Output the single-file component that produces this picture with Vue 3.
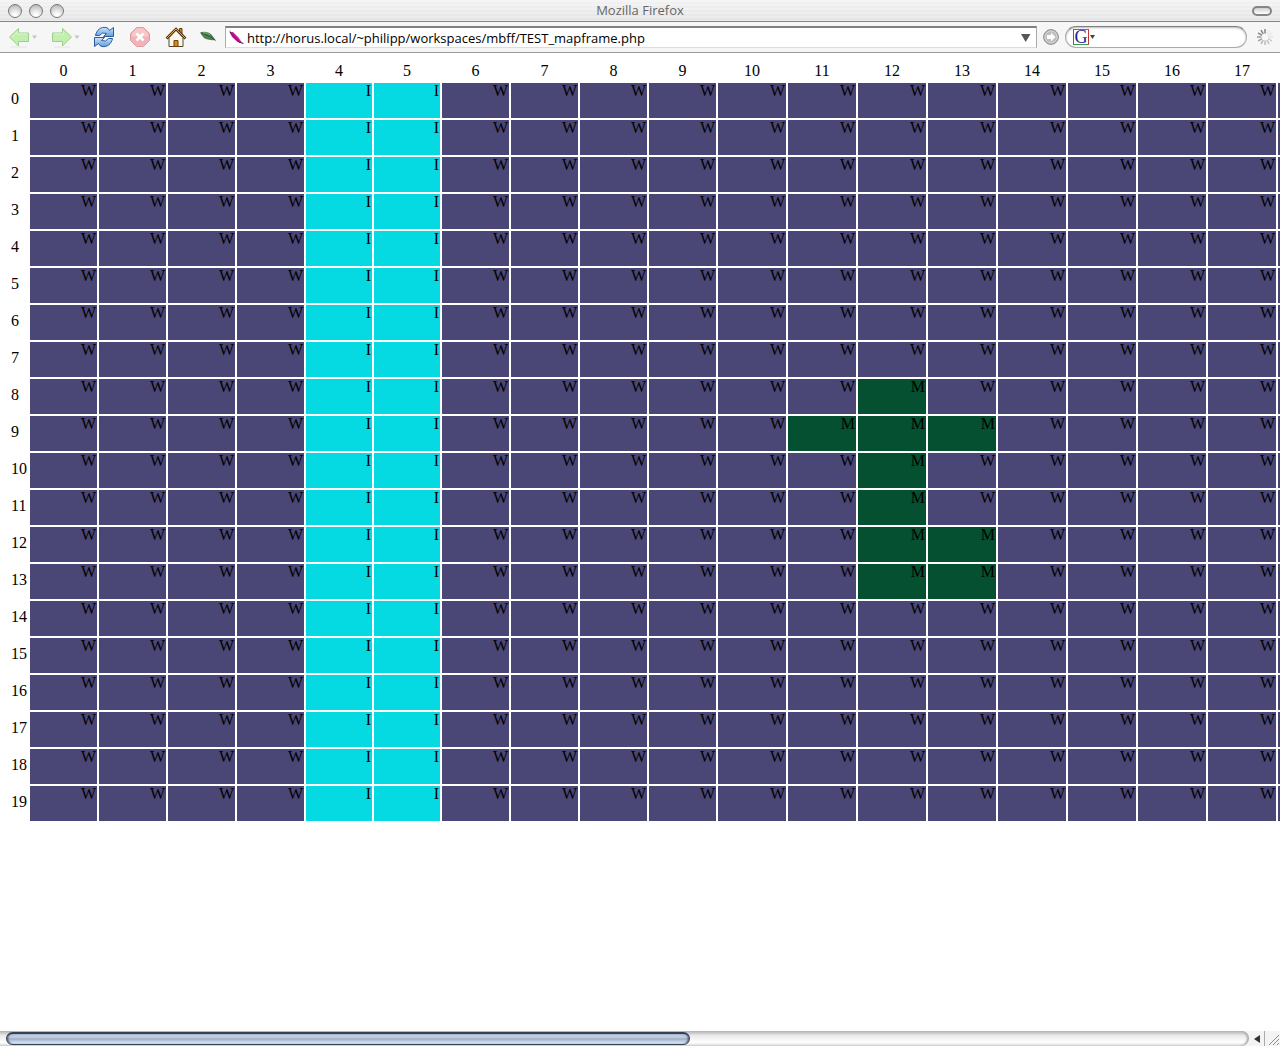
<script setup>
import { ref } from 'vue'

const address = ref('http://horus.local/~philipp/workspaces/mbff/TEST_mapframe.php')
const query = ref('')

const columns = Array.from({ length: 18 }, (_, i) => i)
const rows = Array.from({ length: 20 }, (_, i) => i)

const mountains = { 8: [12], 9: [11, 12, 13], 10: [12], 11: [12], 12: [12, 13], 13: [12, 13] }

function terrain(row, col) {
  if (col === 4 || col === 5) return 'I'
  return mountains[row]?.includes(col) ? 'M' : 'W'
}

function columnSize(col) {
  if (col === 4 || col === 5) return 'ice'
  return col > 9 ? 'wide' : 'regular'
}

const spokes = Array.from({ length: 12 }, (_, i) => ({
  angle: i * 30,
  opacity: [0.9, 0.1, 0.1, 0.15, 0.3, 0.4, 0.45, 0.5, 0.6, 0.7, 0.8, 0.9][i]
}))
</script>

<template>
  <div class="window">
    <header class="titlebar">
      <div class="lights">
        <button class="light" aria-label="Close"></button>
        <button class="light" aria-label="Minimize"></button>
        <button class="light" aria-label="Zoom"></button>
      </div>
      <h1 class="title">Mozilla Firefox</h1>
      <div class="right"><button class="pill" aria-label="Toggle toolbar"></button></div>
    </header>

    <div class="toolbar">
      <nav class="nav">
        <button aria-label="Back">
          <svg width="30" height="22" viewBox="8 26 30 22">
            <path d="M10 47h17" stroke="#e4e4e4" />
            <path d="M9.500 37l9-8.500v4.500h10v8.500h-10v4.500z" fill="#c3efae" stroke="#9dce8c" stroke-linejoin="round" />
            <path d="M12 37l5.500-5v2h10" fill="none" stroke="#dcf7cf" />
            <path d="M32 35.500h5l-2.500 3.500z" fill="#c4c4cc" />
          </svg>
        </button>
        <button aria-label="Forward">
          <svg width="30" height="22" viewBox="50 26 30 22">
            <path d="M54 47h16" stroke="#e4e4e4" />
            <path d="M71.500 37l-9-8.500v4.500h-10v8.500h10v4.500z" fill="#c3efae" stroke="#9dce8c" stroke-linejoin="round" />
            <path d="M53.500 34h10v-3" fill="none" stroke="#dcf7cf" />
            <path d="M74.500 35.500h5l-2.500 3.500z" fill="#c4c4cc" />
          </svg>
        </button>
        <button aria-label="Reload">
          <svg width="24" height="22" viewBox="92 26 24 22">
            <defs>
              <linearGradient id="blue" x1="0" y1="0" x2="0" y2="1">
                <stop offset="0" stop-color="#cfe5fa" /><stop offset="1" stop-color="#5c9de0" />
              </linearGradient>
            </defs>
            <g fill="url(#blue)" stroke="#2d5c9e" stroke-linejoin="round">
              <path d="M95.500 35.500C96.500 30 101 26.500 106 27.500Q108.500 28 109.500 30.500L113.500 27.500V36.500H103.500L106.500 33.500Q102 31.500 99.500 35.500z" />
              <path d="M112.500 38.500C111.500 44 107 47.500 102 46.500Q99.500 46 98.500 43.500L94.500 46.500V37.500H104.500L101.500 40.500Q106 42.500 108.500 38.500z" />
            </g>
          </svg>
        </button>
        <button aria-label="Stop">
          <svg width="24" height="22" viewBox="128 26 24 22">
            <path d="M136.500 27.500h7l6 6v7l-6 6h-7l-6-6v-7z" fill="#f0b3b7" stroke="#df9ca1" />
            <path d="M137 28.500h6l5 5v3h-16v-3z" fill="#f6c8cb" />
            <path d="M136.500 33.500l7 7M143.500 33.500l-7 7" stroke="#fff" stroke-width="2.500" />
          </svg>
        </button>
        <button aria-label="Home">
          <svg width="24" height="22" viewBox="164 26 24 22">
            <path d="M179.500 28.500h2.500v7h-2.500z" fill="#d4882a" stroke="#6b3e12" />
            <path d="M169 37.500l7-7.500 7 7.500v9h-14z" fill="#fbf7ea" stroke="#574634" />
            <path d="M166.500 38.500l9.500-9.500 9.500 9.500" fill="none" stroke="#563512" stroke-width="2.600" />
            <path d="M167 38l9-9 9 9" fill="none" stroke="#e4a850" />
            <path d="M174 40.500h4v6h-4z" fill="#d58b12" stroke="#6f4309" />
          </svg>
        </button>
        <button aria-label="Developer tools">
          <svg width="19" height="22" viewBox="200 26 19 22">
            <path d="M200 32.500C204 31 210 31.500 213 36.500L215.500 40Q205 41 202 35.500z" fill="#528052" />
            <path d="M201 33l9 3.500 5.500 4" fill="none" stroke="#2f5936" />
            <path d="M203 32.800q5-.3 7 2" fill="none" stroke="#8bac7e" />
          </svg>
        </button>
      </nav>

      <div class="address">
        <svg class="feather" width="16" height="16" viewBox="227 29 16 16">
          <path d="M228.500 31l3.500 0 5.500 5.500 4 6-5-1.500-5.500-5z" fill="#d01a9e" />
          <path d="M229 31l9 10 4.500 1.500" fill="none" stroke="#54185b" />
          <path d="M228 30l2 .5" stroke="#d7a33b" />
        </svg>
        <input v-model="address" type="text" aria-label="Address" spellcheck="false" />
        <button class="history" aria-label="Show history">
          <svg width="10" height="8" viewBox="0 0 10 8"><path d="M0 0h9.500L4.700 8z" fill="#565656" /></svg>
        </button>
      </div>

      <button class="go" aria-label="Go">
        <svg width="16" height="16" viewBox="0 0 16 16">
          <circle cx="8" cy="8" r="7.400" fill="#bdbdbd" stroke="#8c8c8c" />
          <circle cx="8" cy="8" r="6" fill="none" stroke="#d6d6d6" />
          <path d="M4 6h4V3.500L12.500 8 8 12.500V10H4z" fill="#fff" />
        </svg>
      </button>

      <div class="search">
        <button class="engine" aria-label="Search engine">
          <span class="google">G</span>
          <svg width="6" height="4" viewBox="0 0 6 4"><path d="M1 0h5L3.500 4z" fill="#444" /></svg>
        </button>
        <input v-model="query" type="text" aria-label="Search" />
      </div>

      <svg class="throbber" width="22" height="22" viewBox="-12 -11 22 22">
        <path
          v-for="s in spokes"
          :key="s.angle"
          d="M0-3.500V-8"
          stroke="#777"
          stroke-width="1.500"
          :opacity="s.opacity"
          :transform="`rotate(${s.angle})`"
        />
      </svg>
    </div>

    <main class="page">
      <table class="map">
        <colgroup>
          <col class="labels" />
          <col v-for="c in columns" :key="c" :class="columnSize(c)" />
          <col class="wide" />
        </colgroup>
        <thead>
          <tr>
            <td></td>
            <th v-for="c in columns" :key="c" scope="col">{{ c }}</th>
            <td></td>
          </tr>
        </thead>
        <tbody>
          <tr v-for="r in rows" :key="r">
            <th scope="row">{{ r }}</th>
            <td v-for="c in columns" :key="c" :class="terrain(r, c)">{{ terrain(r, c) }}</td>
            <td class="W"></td>
          </tr>
        </tbody>
      </table>
    </main>

    <footer class="scroll">
      <div class="track"><div class="thumb"></div></div>
      <button class="step" aria-label="Scroll left">
        <svg width="6" height="8" viewBox="0 0 6 8"><path d="M6 0v8L0 4z" fill="#333" /></svg>
      </button>
      <svg class="grip" width="15" height="15" viewBox="0 0 15 15">
        <path d="M4 14L14 4M8 14l6-6M12 14l2-2" stroke="#8a8a8a" />
      </svg>
    </footer>
  </div>
</template>

<style>
body {
  margin: 0;
  background: #fff;
}
</style>

<style scoped>
.window {
  display: flex;
  flex-direction: column;
  height: 100vh;
  overflow: hidden;
  color: #000;
  font-family: "Liberation Serif", "Times New Roman", serif;
  font-size: 16px;
}

button {
  margin: 0;
  padding: 0;
  border: 0;
  background: none;
  flex: none;
}

svg {
  display: block;
  flex: none;
}

input {
  flex: 1;
  min-width: 0;
  padding: 0;
  border: 0;
  outline: 0;
  background: transparent;
  color: #000;
  font-family: "Open Sans", "Lucida Grande", sans-serif;
  font-size: 13px;
}

.titlebar {
  display: flex;
  align-items: center;
  flex: none;
  box-sizing: border-box;
  height: 22px;
  padding: 0 8px;
  border-bottom: 1px solid #858585;
  background: repeating-linear-gradient(rgba(255, 255, 255, 0.25) 0 2px, transparent 2px 4px), linear-gradient(#f2f2f2, #e4e4e4);
}

.lights,
.right {
  display: flex;
  flex: 1;
  gap: 7px;
}

.right {
  justify-content: flex-end;
}

.light {
  width: 14px;
  height: 14px;
  border: 1px solid #777;
  border-radius: 50%;
  background: radial-gradient(circle at 50% 85%, #fff 10%, #d4d4d4 60%, #aaa);
}

.title {
  margin: 0;
  padding-bottom: 2px;
  color: #666;
  font-family: "Open Sans", "Lucida Grande", sans-serif;
  font-size: 13px;
  font-weight: 400;
  line-height: 18px;
}

.pill {
  width: 20px;
  height: 10px;
  border: 2px solid #858585;
  border-radius: 5px;
  background: linear-gradient(#d0d0d0, #fff);
}

.toolbar {
  display: flex;
  align-items: center;
  flex: none;
  gap: 6px;
  box-sizing: border-box;
  height: 31px;
  padding: 0 5px 0 8px;
  border-bottom: 1px solid #999;
  background: #f6f6f6;
}

.nav {
  display: flex;
  gap: 12px;
}

.address {
  display: flex;
  align-items: center;
  flex: 1;
  box-sizing: border-box;
  height: 22px;
  padding: 0 5px 0 2px;
  border: 1px solid #aaa;
  border-top: 2px solid #808080;
  border-bottom-color: #ddd;
  background: #fff;
}

.feather {
  margin-right: 3px;
}

.search {
  display: flex;
  align-items: center;
  box-sizing: border-box;
  width: 182px;
  height: 22px;
  padding: 0 8px 0 7px;
  border: 1px solid #aaa;
  border-top-color: #808080;
  border-radius: 11px;
  background: #fff;
  box-shadow: inset 0 1px 2px #bbb;
}

.engine {
  display: flex;
  align-items: center;
}

.google {
  box-sizing: border-box;
  width: 16px;
  height: 16px;
  border: 1px solid #3a9a48;
  border-right-color: #c33;
  border-left-color: #36c;
  color: #22229a;
  font-family: "Liberation Serif", serif;
  font-size: 18px;
  line-height: 14px;
  text-align: center;
}

.page {
  flex: 1;
  min-height: 0;
  padding: 8px;
  overflow: hidden;
}

.map {
  width: max-content;
  table-layout: fixed;
  border-spacing: 2px;
}

.labels {
  width: 18px;
}

.regular {
  width: 67px;
}

.ice {
  width: 66px;
}

.wide {
  width: 68px;
}

.map th,
.map td {
  box-sizing: border-box;
  padding: 0 1px;
  font-weight: 400;
}

.map thead th {
  height: 18px;
  line-height: 16px;
  vertical-align: top;
}

.map tbody th {
  padding-bottom: 4px;
  text-align: left;
}

.map tbody td {
  height: 35px;
  line-height: 16px;
  text-align: right;
  vertical-align: top;
}

.W {
  background: #4a4675;
}

.I {
  background: #05dae2;
}

.M {
  background: #055030;
}

.scroll {
  display: flex;
  flex: none;
  height: 15px;
  background: #f4f4f4;
}

.track {
  flex: 1;
  box-sizing: border-box;
  padding: 1px 0 0 6px;
  border-radius: 0 8px 8px 0;
  background: linear-gradient(#b4b4b4, #e9e9e9 30%, #fff 75%, #ddd);
  box-shadow: inset -2px 0 2px #aaa;
}

.thumb {
  box-sizing: border-box;
  width: 55%;
  height: 13px;
  border: 1px solid #344256;
  border-top-width: 2px;
  border-radius: 7px;
  background: linear-gradient(#b5c3d8, #c5d2e5 30%, #9fafc6 50%, #c2d2e6 75%, #dce9f6);
  box-shadow: inset 2px 0 2px -1px #42536c, inset -2px 0 2px -1px #42536c;
}

.step {
  display: flex;
  align-items: center;
  justify-content: center;
  width: 16px;
  border-right: 1px solid #aaa;
}
</style>
